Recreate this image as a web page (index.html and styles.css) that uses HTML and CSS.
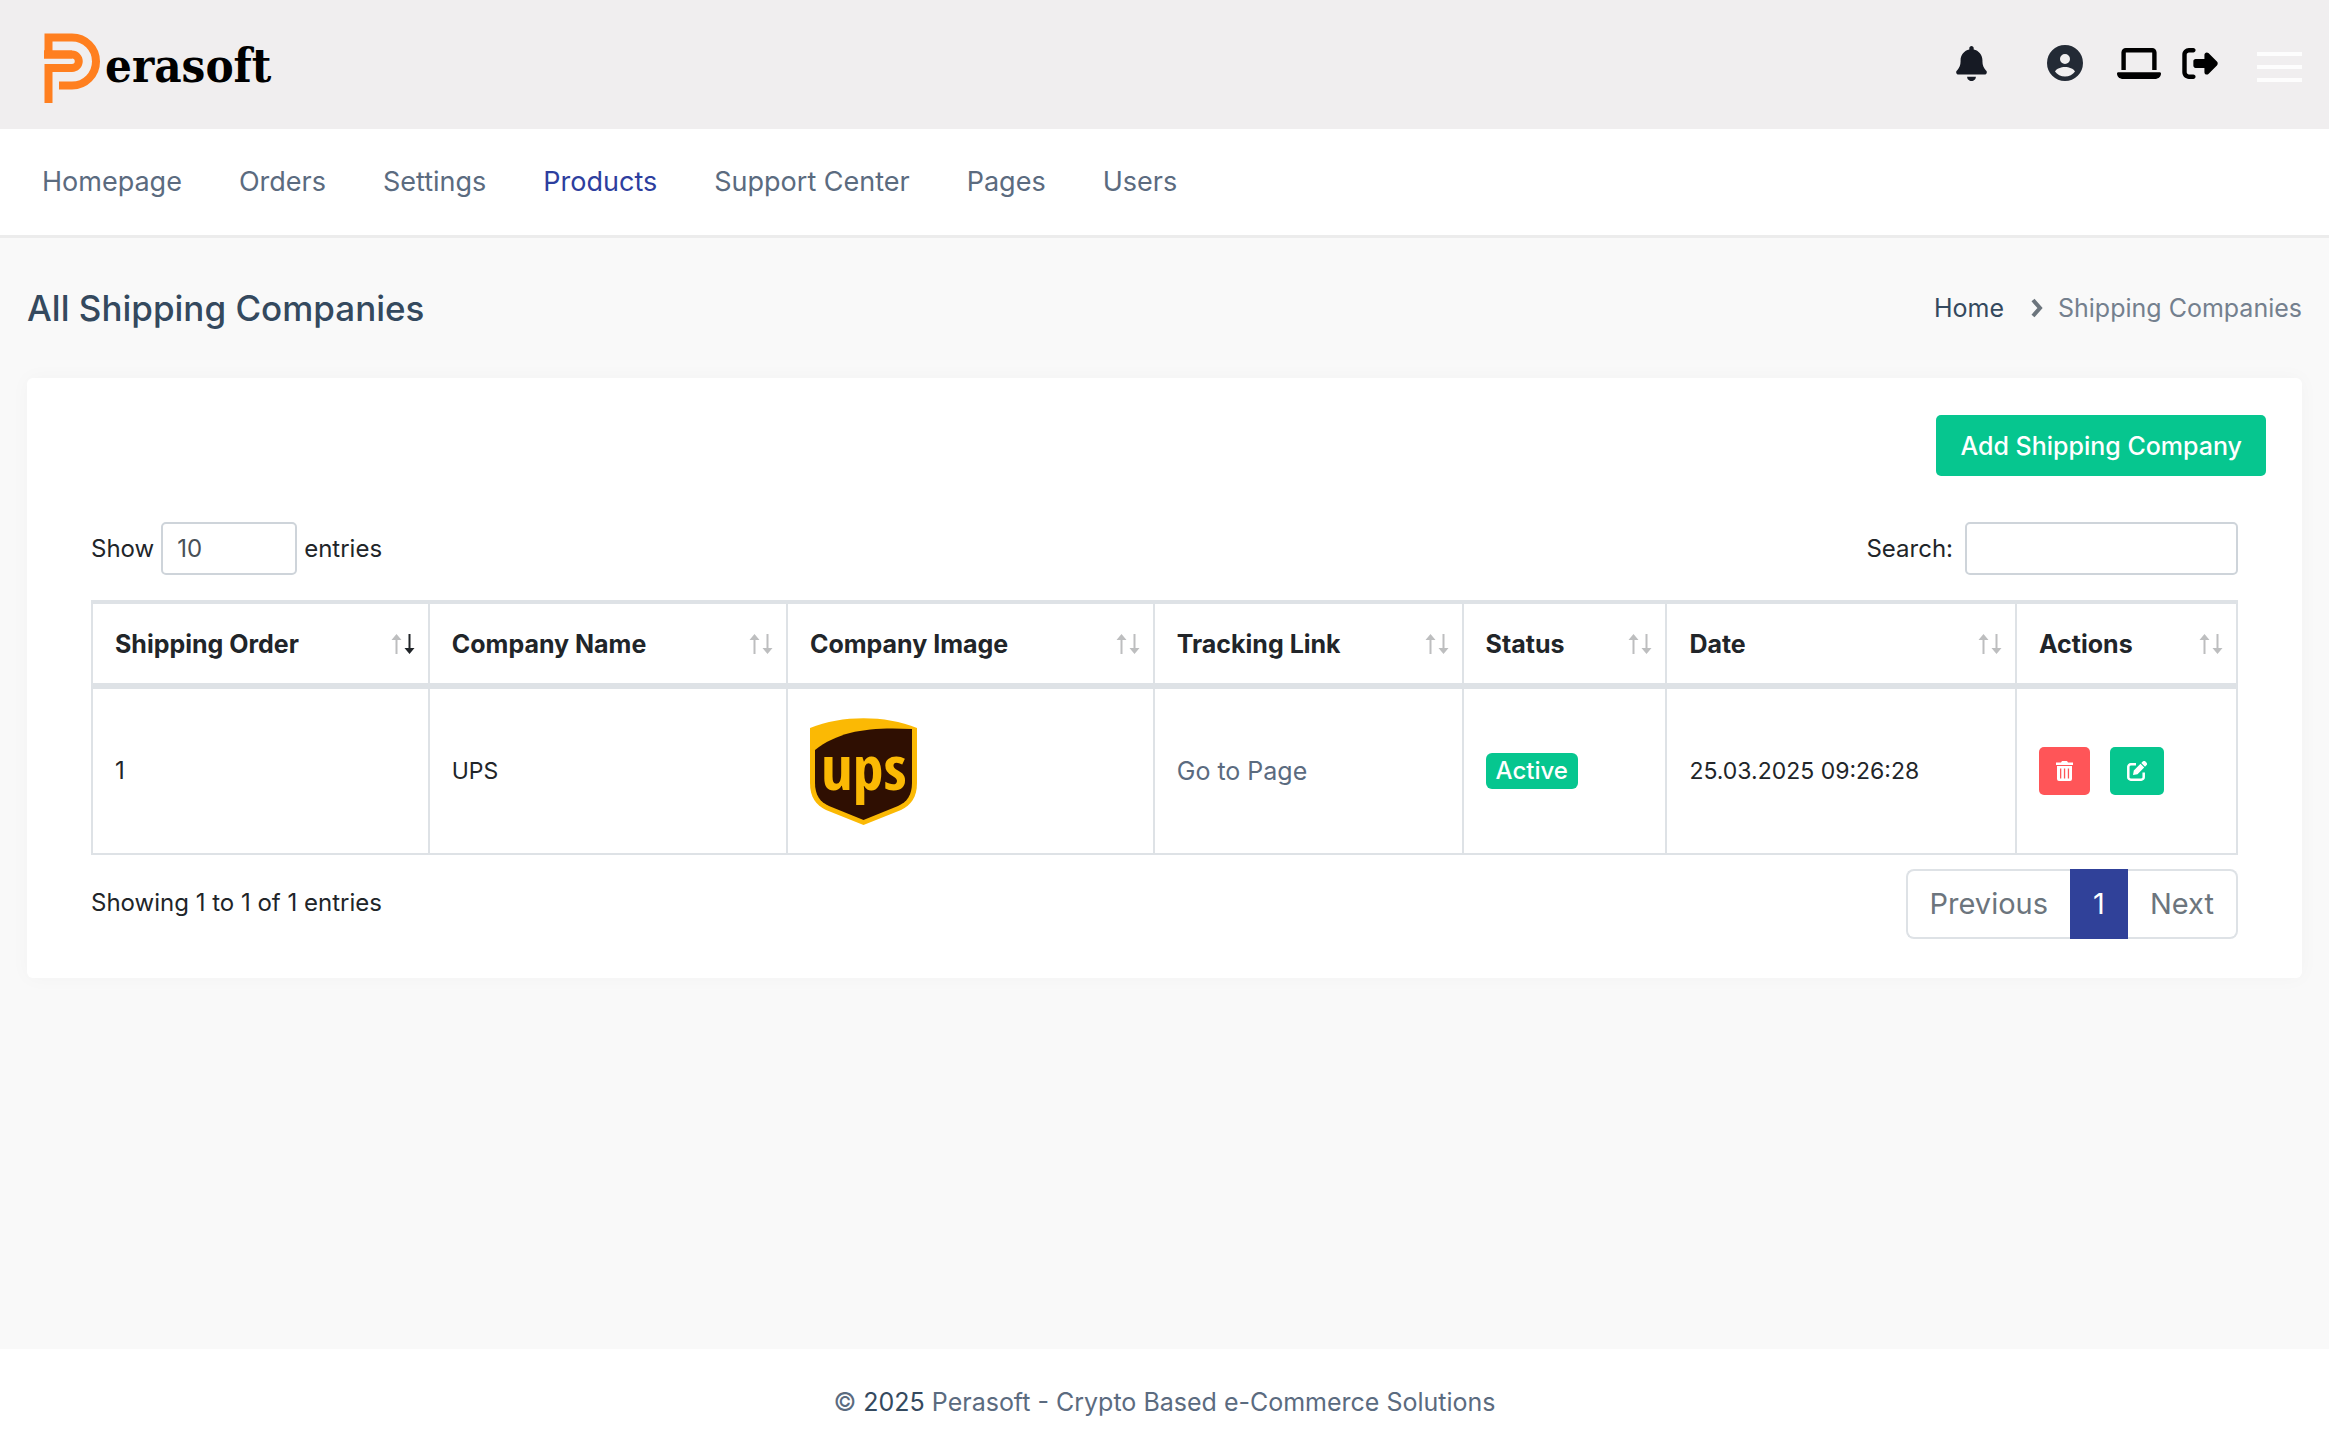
FILE: index.html
```html
<!DOCTYPE html>
<html lang="en">
<head>
<meta charset="utf-8">
<meta name="viewport" content="width=device-width, initial-scale=1">
<title>All Shipping Companies - Perasoft</title>
<link rel="stylesheet" href="styles.css">
</head>
<body>
<svg class="sprite" aria-hidden="true">
  <symbol id="sort-up" viewBox="0 0 10 20"><path d="M5 0l5 6H6v14H4V6H0z"/></symbol>
  <symbol id="sort-down" viewBox="0 0 10 20"><path d="M5 20l5-6H6V0H4v14H0z"/></symbol>
</svg>

<header class="topbar">
  <a class="brand" href="#" aria-label="Perasoft">
    <svg class="brand-mark" viewBox="0 0 57 70" fill="none" stroke="#ff7f1f" stroke-width="8">
      <path d="M0 21.500H28M4.500 25V4.500H28a24 24 0 0 1 0 48H15"/>
      <path d="M4.500 70V35H28a6.500 6.500 0 0 0 0-13.500H0"/>
    </svg>
    <span class="brand-name">erasoft</span>
  </a>
  <div class="tools">
    <button class="tool tool-bell" type="button" aria-label="Notifications">
      <svg width="31" height="35" viewBox="0 0 448 512"><path d="M224 0c-17.700 0-32 14.300-32 32V51.200C119 66 64 130.600 64 208v18.800c0 47-17.300 92.400-48.500 127.600l-7.400 8.300c-8.400 9.400-10.400 22.900-5.300 34.400S19.400 416 32 416H416c12.600 0 24-7.400 29.200-18.900s3.100-25-5.300-34.400l-7.400-8.300C401.300 319.200 384 273.900 384 226.800V208c0-77.400-55-142-128-156.800V32c0-17.700-14.300-32-32-32zm45.300 493.300c12-12 18.700-28.300 18.700-45.300H160c0 17 6.700 33.300 18.700 45.300s28.300 18.700 45.300 18.700s33.300-6.700 45.300-18.700z"/></svg>
    </button>
    <button class="tool tool-user" type="button" aria-label="Account">
      <svg width="36" height="36" viewBox="0 0 36 36"><path fill-rule="evenodd" d="M18 0a18 18 0 1 1 0 36a18 18 0 1 1 0-36zM18 9a5 5 0 1 0 0 10a5 5 0 1 0 0-10zM8 26.500c2 3 6 5 10 5s8-2 10-5c-1.500-3-6-4.500-10-4.500s-8.500 1.500-10 4.500z"/></svg>
    </button>
    <a class="tool tool-site" href="#" aria-label="View site">
      <svg width="44" height="31" viewBox="0 32 640 448"><path d="M128 32C92.700 32 64 60.700 64 96V352h64V96H512V352h64V96c0-35.300-28.700-64-64-64H128zM19.200 384C8.600 384 0 392.600 0 403.200C0 445.600 34.400 480 76.800 480H563.200c42.400 0 76.800-34.400 76.800-76.800c0-10.600-8.600-19.200-19.200-19.200H19.200z"/></svg>
    </a>
    <a class="tool tool-exit" href="#" aria-label="Log out">
      <svg width="36" height="31" viewBox="0 32 512 448"><path d="M377.900 105.900L500.700 228.700c7.200 7.200 11.300 17.100 11.300 27.300s-4.100 20.100-11.300 27.300L377.900 406.100c-6.400 6.400-15 9.900-24 9.900c-18.700 0-33.900-15.200-33.900-33.900l0-62.100-128 0c-17.700 0-32-14.300-32-32l0-64c0-17.700 14.300-32 32-32l128 0 0-62.100c0-18.700 15.200-33.900 33.900-33.900c9 0 17.600 3.600 24 9.900zM160 96L96 96c-17.700 0-32 14.300-32 32l0 256c0 17.700 14.300 32 32 32l64 0c17.700 0 32 14.300 32 32s-14.300 32-32 32l-64 0c-53 0-96-43-96-96L0 128C0 75 43 32 96 32l64 0c17.700 0 32 14.300 32 32s-14.300 32-32 32z"/></svg>
    </a>
    <button class="tool tool-menu" type="button" aria-label="Menu"><span></span><span></span><span></span></button>
  </div>
</header>

<nav class="mainnav">
  <a href="#">Homepage</a>
  <a href="#">Orders</a>
  <a href="#">Settings</a>
  <a href="#" class="current">Products</a>
  <a href="#">Support Center</a>
  <a href="#">Pages</a>
  <a href="#">Users</a>
</nav>

<main class="content">
  <div class="page-head">
    <h1>All Shipping Companies</h1>
    <div class="crumbs">
      <a href="#">Home</a>
      <svg width="12" height="20" viewBox="0 0 12 20" fill="none" stroke="#6c757d" stroke-width="4"><path d="M2 2L9 10L2 18"/></svg>
      <span>Shipping Companies</span>
    </div>
  </div>

  <section class="card">
    <div class="card-actions"><button class="btn-add" type="button">Add Shipping Company</button></div>
    <div class="card-body">
      <div class="controls">
        <label class="length">Show
          <select><option>10</option><option>25</option><option>50</option></select>
          entries</label>
        <label class="search">Search: <input type="search"></label>
      </div>
      <table class="grid">
        <colgroup><col class="c-order"><col class="c-name"><col class="c-image"><col class="c-link"><col class="c-status"><col class="c-date"><col class="c-actions"></colgroup>
        <thead>
          <tr>
            <th><div class="th sorted">Shipping Order<span class="sort"><svg><use href="#sort-up"/></svg><svg><use href="#sort-down"/></svg></span></div></th>
            <th><div class="th">Company Name<span class="sort"><svg><use href="#sort-up"/></svg><svg><use href="#sort-down"/></svg></span></div></th>
            <th><div class="th">Company Image<span class="sort"><svg><use href="#sort-up"/></svg><svg><use href="#sort-down"/></svg></span></div></th>
            <th><div class="th">Tracking Link<span class="sort"><svg><use href="#sort-up"/></svg><svg><use href="#sort-down"/></svg></span></div></th>
            <th><div class="th">Status<span class="sort"><svg><use href="#sort-up"/></svg><svg><use href="#sort-down"/></svg></span></div></th>
            <th><div class="th">Date<span class="sort"><svg><use href="#sort-up"/></svg><svg><use href="#sort-down"/></svg></span></div></th>
            <th><div class="th">Actions<span class="sort"><svg><use href="#sort-up"/></svg><svg><use href="#sort-down"/></svg></span></div></th>
          </tr>
        </thead>
        <tbody>
          <tr>
            <td>1</td>
            <td class="compact">UPS</td>
            <td>
              <svg class="ups" viewBox="0 0 107 107" role="img" aria-label="UPS logo">
                <path fill="#fbb904" d="M0 10C32-3 75-3 107 10V65C107 79 101 87 91 92L53.500 107L16 92C6 87 0 79 0 65z"/>
                <path fill="#2f0f02" d="M5 32C30 12 62 9 102 11V65C102 77 97 84 88 88L53.500 102L19 88C10 84 5 77 5 65z"/>
                <text class="ups-text" x="54" y="72" text-anchor="middle">ups</text>
              </svg>
            </td>
            <td><a class="page-link" href="#">Go to Page</a></td>
            <td><span class="badge">Active</span></td>
            <td class="compact">25.03.2025 09:26:28</td>
            <td>
              <div class="row-actions">
                <button class="act act-delete" type="button" aria-label="Delete">
                  <svg width="17" height="20" viewBox="0 0 17 20"><path fill="#fff" fill-rule="evenodd" d="M0 1.500h5L6 0h5l1 1.500h5V4H0zM1 5h15v13a2 2 0 0 1-2 2H3a2 2 0 0 1-2-2zM4 7.500v10h1.300v-10zM7.900 7.500v10h1.300v-10zM11.800 7.500v10h1.300v-10z"/></svg>
                </button>
                <button class="act act-edit" type="button" aria-label="Edit">
                  <svg width="20" height="20" viewBox="0 0 20 20"><path fill="none" stroke="#fff" stroke-width="2.500" d="M9 3.300H4A2.500 2.500 0 0 0 1.300 6v10A2.500 2.500 0 0 0 4 18.700h10a2.500 2.500 0 0 0 2.700-2.700v-4.500"/><path fill="#fff" d="M6 14l.8-4.500L13.500 2.800l3.700 3.700L10.500 13.200zM14.300 2l1.400-1.400a2 2 0 0 1 2.800 0l.9.9a2 2 0 0 1 0 2.800L18 5.700z"/></svg>
                </button>
              </div>
            </td>
          </tr>
        </tbody>
      </table>
      <div class="table-foot">
        <p>Showing 1 to 1 of 1 entries</p>
        <div class="pager">
          <button type="button">Previous</button><button type="button" class="on">1</button><button type="button">Next</button>
        </div>
      </div>
    </div>
  </section>
</main>

<footer class="footer">© <a class="year" href="#">2025</a> Perasoft - Crypto Based e-Commerce Solutions</footer>
</body>
</html>
```
FILE: styles.css
```css
* { box-sizing: border-box; }
body {
  margin: 0;
  min-height: 100vh;
  display: flex;
  flex-direction: column;
  background: #f9f9f9;
  color: #212529;
  font: 24px/36px Inter, "Open Sans", sans-serif;
}
a { color: inherit; text-decoration: none; }
button, input, select { font: inherit; color: inherit; }
button { cursor: pointer; }
svg { display: block; }
.sprite { position: absolute; width: 0; height: 0; }

.topbar {
  display: flex;
  justify-content: space-between;
  height: 129px;
  padding: 33px 27px 0 44px;
  background: #f0eeef;
}
.brand { display: flex; height: 70px; gap: 4px; color: #000; }
.brand-mark { width: 57px; height: 70px; }
.brand-name { font: bold 47px/66px "DejaVu Serif Condensed", "DejaVu Serif", serif; }
.tools { display: flex; align-items: center; height: 60px; color: #000; }
.tool { display: block; padding: 0; border: 0; background: none; fill: #000; }
.tool-bell { margin-right: 60px; fill: #161a24; }
.tool-user { margin-right: 34px; fill: #232a35; }
.tool-site { margin-right: 21px; }
.tool-exit { margin-right: 39px; }
.tool-menu { display: flex; flex-direction: column; gap: 9px; width: 45px; padding-top: 8px; }
.tool-menu span { height: 4px; background: #fdfdfd; }

.mainnav {
  display: flex;
  gap: 57px;
  padding: 33px 42px;
  background: #fff;
  border-bottom: 3px solid #ececec;
  color: #5b6b7f;
  font-size: 27px;
  line-height: 40px;
}
.mainnav .current { color: #2d3e9e; }

.content { flex: 1; padding: 0 27px; }
.page-head { display: flex; justify-content: space-between; align-items: center; height: 140px; }
h1 { margin: 0; color: #34495e; font-size: 35px; line-height: 40px; font-weight: 500; }
.crumbs { display: flex; align-items: center; color: #74808e; font-size: 25px; }
.crumbs a { color: #34495e; margin-right: 27px; }
.crumbs svg { margin-right: 15px; }

.card { padding: 37px 36px 39px; background: #fff; border-radius: 6px; box-shadow: 0 0 20px rgba(0, 0, 0, .03); }
.card-actions { display: flex; justify-content: flex-end; }
.btn-add { height: 61px; padding: 0 24px; border: 0; border-radius: 5px; background: #06c68f; color: #fff; font-size: 25px; font-weight: 500; }
.card-body { padding: 46px 28px 0; }
.controls { display: flex; justify-content: space-between; margin-bottom: 25px; }
.length, .search { display: flex; align-items: center; }
.length { gap: 7px; }
.search { gap: 12px; }
.length select, .search input {
  appearance: none;
  height: 53px;
  padding: 0 14px;
  border: 2px solid #ced4da;
  border-radius: 5px;
  background: #fff;
  color: #495057;
}
.length select { width: 136px; }
.search input { width: 273px; }

.grid { width: 100%; table-layout: fixed; border-collapse: collapse; border: 2px solid #dee2e6; }
.grid th, .grid td { padding: 0 22px; border: 2px solid #dee2e6; text-align: left; }
.grid th { height: 84px; border-top-width: 4px; border-bottom-width: 6px; font-size: 25px; font-weight: 700; white-space: nowrap; }
.grid td { height: 168px; }
.grid .compact { font-size: 23px; }
.c-order { width: 15.7%; } .c-name { width: 16.7%; } .c-image { width: 17.1%; } .c-link { width: 14.4%; }
.c-status { width: 9.5%; } .c-date { width: 16.3%; } .c-actions { width: 10.3%; }
.th { display: flex; justify-content: space-between; align-items: center; margin-right: -9px; }
.sort { display: flex; gap: 2px; fill: #bdbebf; }
.sort svg { width: 11px; height: 20px; }
.sorted .sort svg:last-child { fill: #212529; }
.ups { width: 107px; height: 107px; }
.ups-text { font: bold 62px "Liberation Sans Narrow", "Open Sans Condensed", "Roboto Condensed", sans-serif; fill: #fbb904; }
.page-link { color: #5b6b7f; font-size: 25px; }
.badge { display: inline-block; padding: 0 10px; border-radius: 6px; background: #06c68f; color: #fff; font-weight: 500; }
.row-actions { display: flex; gap: 20px; }
.act { display: grid; place-items: center; height: 48px; padding: 0 17px; border: 0; border-radius: 5px; }
.act-delete { background: #ff5558; }
.act-edit { background: #06c68f; }

.table-foot { display: flex; justify-content: space-between; margin-top: 14px; }
.table-foot p { margin: 16px 0 0; }
.pager { display: flex; }
.pager button {
  min-width: 58px;
  height: 70px;
  padding: 0 22px;
  border: 2px solid #dee2e6;
  border-width: 2px 0;
  background: #fff;
  color: #6c757d;
  font-size: 29px;
}
.pager button:first-child { border-left-width: 2px; border-radius: 8px 0 0 8px; }
.pager button:last-child { border-right-width: 2px; border-radius: 0 8px 8px 0; }
.pager .on { padding: 0; border-color: #304199; background: #304199; color: #fff; }

.footer { padding: 35px 27px 36px; background: #fff; color: #5b6b7f; font-size: 25px; text-align: center; }
.year { color: #34495e; }
```
